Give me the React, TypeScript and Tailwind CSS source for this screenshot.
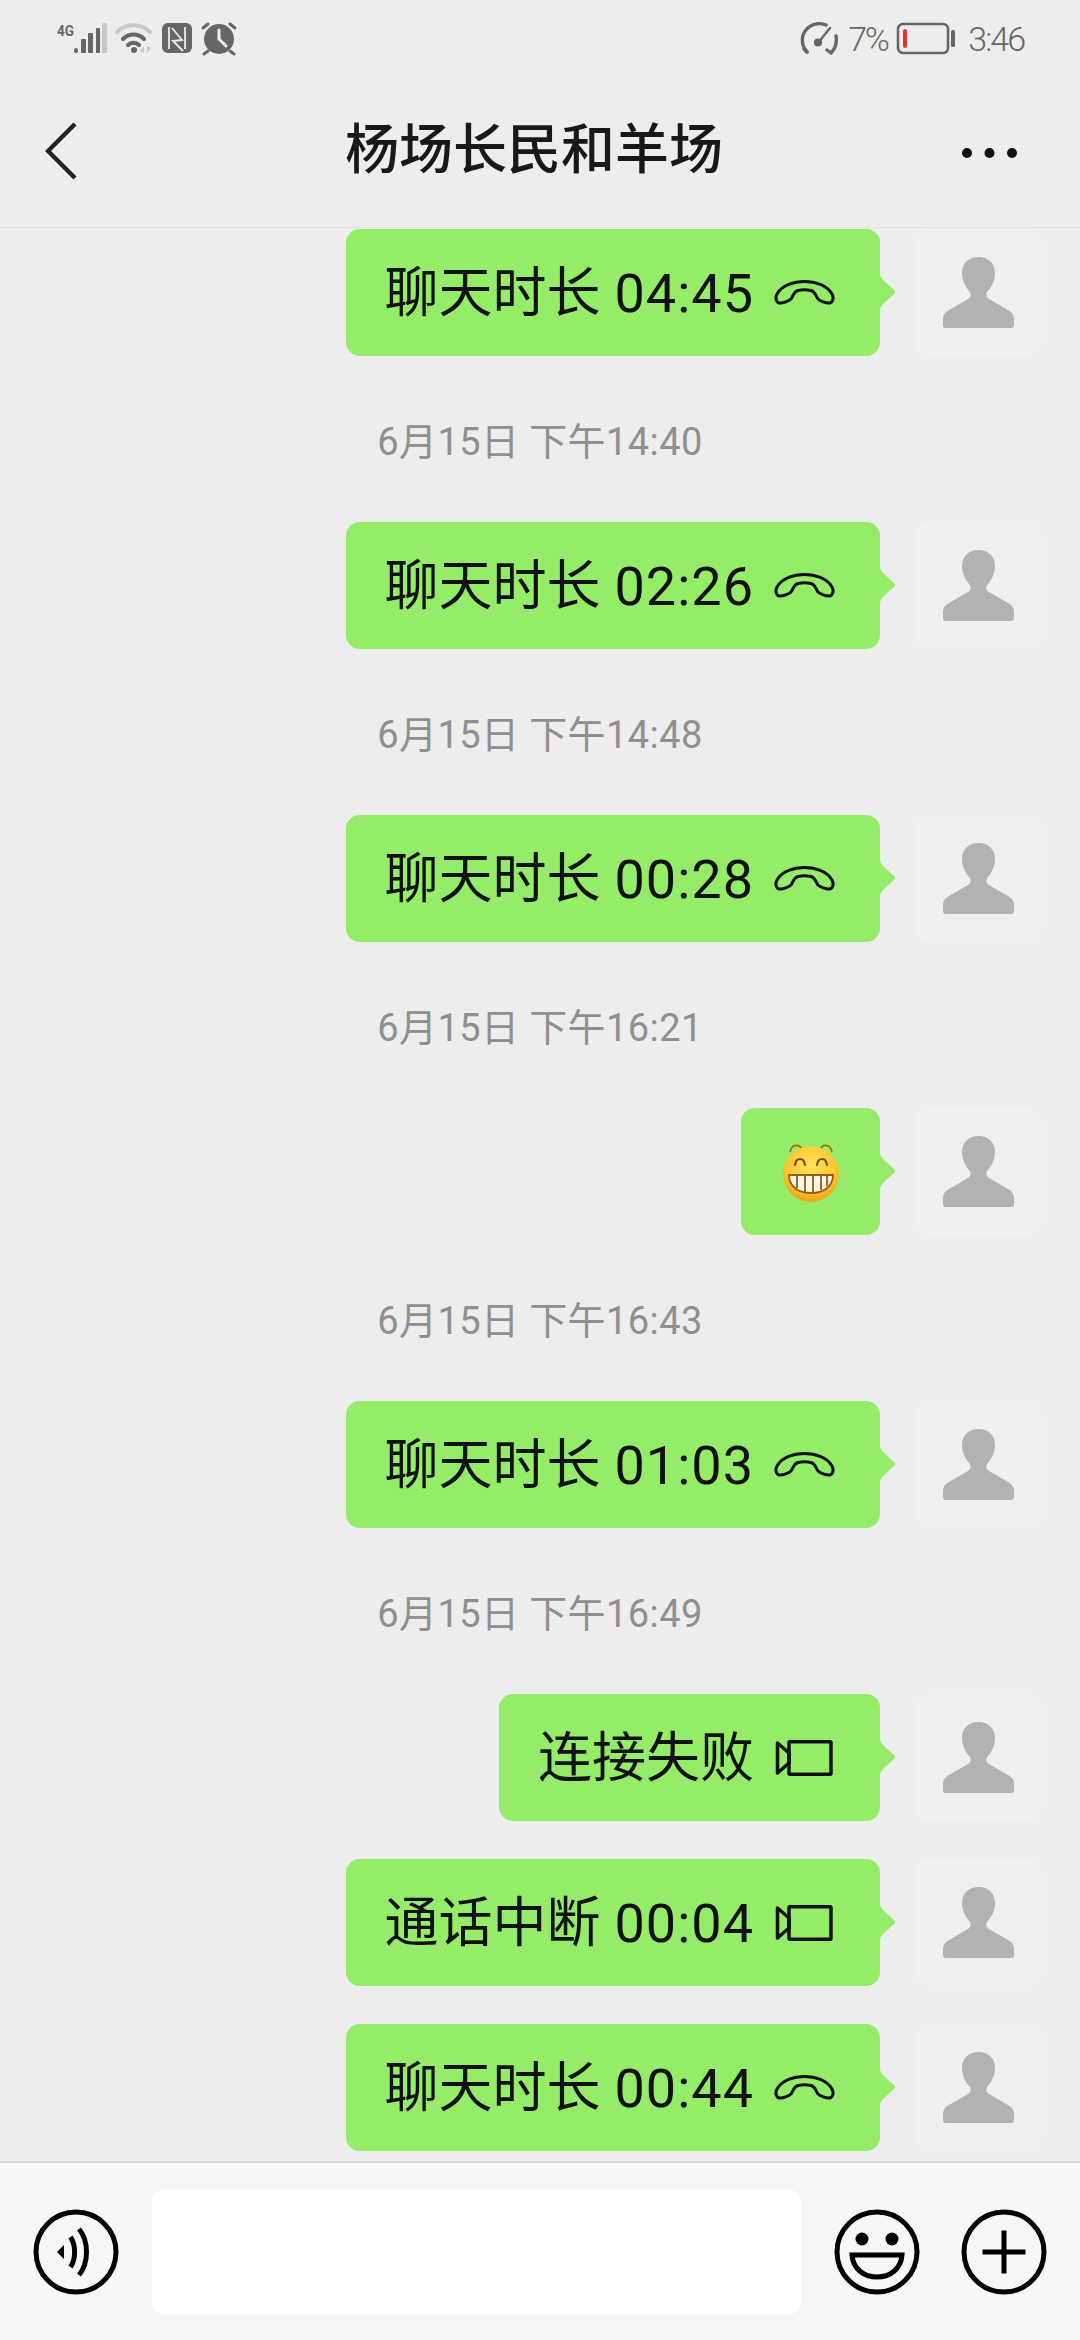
const CJK = "font-['Roboto','Noto_Sans_CJK_SC',sans-serif]";

type Msg =
  | { kind: "time"; text: string }
  | { kind: "call"; text: string; duration?: string; icon: "phone" | "video" }
  | { kind: "emoji" };

const messages: Msg[] = [
  { kind: "call", text: "聊天时长", duration: "04:45", icon: "phone" },
  { kind: "time", text: "6月15日 下午14:40" },
  { kind: "call", text: "聊天时长", duration: "02:26", icon: "phone" },
  { kind: "time", text: "6月15日 下午14:48" },
  { kind: "call", text: "聊天时长", duration: "00:28", icon: "phone" },
  { kind: "time", text: "6月15日 下午16:21" },
  { kind: "emoji" },
  { kind: "time", text: "6月15日 下午16:43" },
  { kind: "call", text: "聊天时长", duration: "01:03", icon: "phone" },
  { kind: "time", text: "6月15日 下午16:49" },
  { kind: "call", text: "连接失败", icon: "video" },
  { kind: "call", text: "通话中断", duration: "00:04", icon: "video" },
  { kind: "call", text: "聊天时长", duration: "00:44", icon: "phone" },
];

function PhoneIcon() {
  return (
    <svg width="61" height="25" viewBox="0 0 61 25" fill="none" stroke="#111" strokeWidth="3" className="ml-[20px] mr-[45px] shrink-0">
      <path d="M3 14C8 5 20 1.5 30.5 1.5S53 5 58 14C60 18 59 22 56 23C52 23.5 46 21 44 19C42 17 42 12 37 10.5C33 9.5 28 9.5 24 10.5C19 12 19 17 17 19C15 21 9 23.5 5 23C2 22 1 18 3 14Z" />
    </svg>
  );
}

function VideoIcon() {
  return (
    <svg width="58" height="36" viewBox="0 0 58 36" fill="none" stroke="#111" strokeWidth="3.5" strokeLinejoin="round" className="ml-[21px] mr-[47px] shrink-0">
      <rect x="14" y="1.8" width="42" height="32.4" rx="1" />
      <path d="M2.5 3L14 13V23L2.5 33Z" />
    </svg>
  );
}

function GrinEmoji() {
  return (
    <svg width="60" height="60" viewBox="0 0 60 60">
      <defs>
        <radialGradient id="face" cx="50%" cy="35%" r="70%">
          <stop offset="0%" stopColor="#ffe45c" />
          <stop offset="65%" stopColor="#fbc52c" />
          <stop offset="100%" stopColor="#e99a14" />
        </radialGradient>
      </defs>
      <path d="M9 10C11 1 19 2 21 8M39 8C41 2 49 1 51 10" fill="none" stroke="#a86a10" strokeWidth="1.6" />
      <circle cx="30" cy="32" r="28" fill="url(#face)" />
      <path d="M14 23C15 15 23 15 24 23M36 23C37 15 45 15 46 23" fill="none" stroke="#7a4508" strokeWidth="2" strokeLinecap="round" />
      <path d="M8 33H52C52 45 42 51 30 51S8 45 8 33Z" fill="#fff8ea" stroke="#9a5a10" strokeWidth="1.8" />
      <path d="M16 33V46M24 33V50M32 33V50M40 33V48M46 33V44" stroke="#9a5a10" strokeWidth="1.8" />
    </svg>
  );
}

function Avatar() {
  return (
    <div className="flex h-[127px] w-[127px] shrink-0 items-center justify-center rounded-[14px] bg-[#efefef]">
      <svg width="71" height="71" viewBox="0 0 71 71" fill="#b2b2b2" className="mb-[1px]">
        <path d="M35.5 0C45 0 52 6 52 16C52 24 48 31 44 35C43 38 43 40 46 42L65 53C69 55 71 58 71 62V68Q71 71 68 71H3Q0 71 0 68V62C0 58 2 55 6 53L25 42C28 40 28 38 27 35C23 31 19 24 19 16C19 6 26 0 35.5 0Z" />
      </svg>
    </div>
  );
}

function Bubble({ children, className }: { children: React.ReactNode; className: string }) {
  return (
    <div className={`relative flex h-[127px] items-center rounded-[14px] bg-[#95ec69] ${className}`}>
      {children}
      <svg width="16" height="38" viewBox="0 0 16 38" fill="#95ec69" className="absolute left-full top-[44px]">
        <path d="M0 0C0 4 2 6 4 8L14 17Q16 19 14 21L4 30C2 32 0 34 0 38Z" />
      </svg>
    </div>
  );
}

function Row({ msg }: { msg: Msg }) {
  if (msg.kind === "time") {
    return (
      <div className={`flex h-[166px] items-center justify-center pt-[6px] text-[38px] tracking-[0.4px] text-[#8f8f8f] ${CJK}`}>
        {msg.text}
      </div>
    );
  }
  return (
    <div className="flex justify-end gap-[35px] pr-[38px]">
      {msg.kind === "emoji" ? (
        <Bubble className="w-[139px] justify-center">
          <GrinEmoji />
        </Bubble>
      ) : (
        <Bubble className="pl-[39px]">
          <span className={`whitespace-nowrap pt-[2px] text-[54px] leading-none text-[#111] ${CJK}`}>
            {msg.text}
            {msg.duration && <span className="ml-[14px] tracking-[1px]">{msg.duration}</span>}
          </span>
          {msg.icon === "phone" ? <PhoneIcon /> : <VideoIcon />}
        </Bubble>
      )}
      <Avatar />
    </div>
  );
}

function StatusLeft() {
  return (
    <svg width="190" height="36" viewBox="0 0 190 36" className="shrink-0">
      <text x="0" y="15" fontFamily="Roboto" fontWeight="700" fontSize="15" fill="#666" textLength="17" lengthAdjust="spacingAndGlyphs">4G</text>
      <g fill="#666">
        <rect x="17" y="27" width="4" height="5" rx="2" />
        <rect x="24" y="18" width="5" height="14" rx="1" />
        <rect x="31" y="12" width="5" height="20" rx="1" />
        <rect x="39" y="7" width="4" height="25" rx="1" />
      </g>
      <rect x="45" y="2" width="5" height="30" rx="1" fill="#c8c8c8" />
      <g fill="none" strokeLinecap="round">
        <path d="M60 11C69 2 84 2 93 11" stroke="#c8c8c8" strokeWidth="4" />
        <path d="M66 18C72 12 81 12 87 18" stroke="#666" strokeWidth="4" />
        <path d="M71 24C74 21 79 21 82 24" stroke="#666" strokeWidth="4" />
      </g>
      <circle cx="77" cy="29" r="3" fill="#666" />
      <path d="M87 32V25L83 30ZM90 25V32L94 27Z" fill="#c8c8c8" />
      <rect x="105" y="2" width="30" height="30" rx="6" fill="#666" />
      <path d="M112 6V28M128 6V28M115 7L125 19L116 20L126 30" fill="none" stroke="#ededed" strokeWidth="1.8" />
      <circle cx="162" cy="18" r="15" fill="#666" />
      <path d="M162 9V18L169 25" fill="none" stroke="#ededed" strokeWidth="3" strokeLinecap="round" />
      <path d="M146 7L151 3M178 7L173 3M151 30L147 33M173 30L177 33" stroke="#666" strokeWidth="3" strokeLinecap="round" />
    </svg>
  );
}

function StatusRight() {
  return (
    <div className="flex items-center">
      <svg width="38" height="33" viewBox="0 0 38 33" fill="none" stroke="#666" strokeWidth="3.4" strokeLinecap="round">
        <path d="M7 30C0 22 1 11 9 5C14 1 21 1 26 3" />
        <path d="M36 14C37 20 36 26 31 31M31 31L27 28" />
        <path d="M7 30L4 27" />
        <path d="M18 21L30 6" strokeWidth="2.4" />
        <circle cx="18" cy="20.5" r="2.4" fill="#666" />
      </svg>
      <span className="ml-[10px] text-[34px] font-light leading-none tracking-[-2.5px] text-[#666] font-['Roboto',sans-serif]">7%</span>
      <svg width="60" height="33" viewBox="0 0 60 33" fill="none" className="ml-[9px]">
        <rect x="2" y="2" width="50" height="29" rx="5" stroke="#666" strokeWidth="2.6" />
        <rect x="7" y="7" width="4" height="19" rx="2" fill="#f03024" />
        <rect x="55" y="8" width="4" height="17" rx="1.5" fill="#666" />
      </svg>
      <span className="ml-[12px] text-[34px] font-light leading-none tracking-[-2px] text-[#666] font-['Roboto',sans-serif]">3:46</span>
    </div>
  );
}

function Footer() {
  return (
    <div className="flex h-[179px] shrink-0 items-center border-t-2 border-[#d8d8d8] bg-[#f7f7f7] pl-[33px]">
      <svg width="86" height="86" viewBox="0 0 86 86" fill="none" stroke="#000" strokeWidth="5" className="shrink-0">
        <circle cx="43" cy="43" r="40" />
        <path d="M24 43L31 36V50Z" fill="#000" stroke="none" />
        <path d="M37.5 28C43 36 43 50 37.5 58" />
        <path d="M46 20C56 32 56 54 46 66" />
      </svg>
      <div className="ml-[33px] h-[126px] w-[649px] rounded-[14px] bg-white" />
      <svg width="86" height="86" viewBox="0 0 86 86" fill="none" stroke="#000" strokeWidth="5" className="ml-[33px] shrink-0">
        <circle cx="43" cy="43" r="40" />
        <circle cx="28" cy="30" r="6.5" fill="#000" stroke="none" />
        <circle cx="58" cy="30" r="6.5" fill="#000" stroke="none" />
        <path d="M18 46H68C67 60 56 68 43 68S19 60 18 46Z" />
      </svg>
      <svg width="86" height="86" viewBox="0 0 86 86" fill="none" stroke="#000" strokeWidth="5" className="ml-[41px] shrink-0">
        <circle cx="43" cy="43" r="40" />
        <path d="M21.5 43H64.5M43 21.5V64.5" />
      </svg>
    </div>
  );
}

export default function App() {
  return (
    <div className="flex h-[2340px] w-[1080px] flex-col overflow-hidden bg-[#ededed]">
      <div className="shrink-0 border-b border-[#e2e2e2]">
        <div className="flex h-[75px] items-center justify-between pl-[57px] pr-[56px] pt-[2px]">
          <StatusLeft />
          <StatusRight />
        </div>
        <div className="flex h-[152px] items-center">
          <svg width="32" height="58" viewBox="0 0 32 58" fill="none" stroke="#222" strokeWidth="4.4" className="ml-[45px] shrink-0">
            <path d="M30 2L3 29L30 56" />
          </svg>
          <div className={`ml-[268px] whitespace-nowrap text-[54px] font-medium leading-none text-[#181818] ${CJK}`}>杨场长民和羊场</div>
          <svg width="56" height="12" viewBox="0 0 56 12" fill="#111" className="ml-auto mr-[62px] mt-[4px] shrink-0">
            <circle cx="5" cy="6" r="5" />
            <circle cx="27.5" cy="6" r="5" />
            <circle cx="50" cy="6" r="5" />
          </svg>
        </div>
      </div>
      <div className="flex-1 overflow-hidden pt-[1px]">
        {messages.map((m, i) => (
          <div key={i}>
            {i > 0 && m.kind !== "time" && messages[i - 1].kind !== "time" && <div className="h-[38px]" />}
            <Row msg={m} />
          </div>
        ))}
      </div>
      <Footer />
    </div>
  );
}
